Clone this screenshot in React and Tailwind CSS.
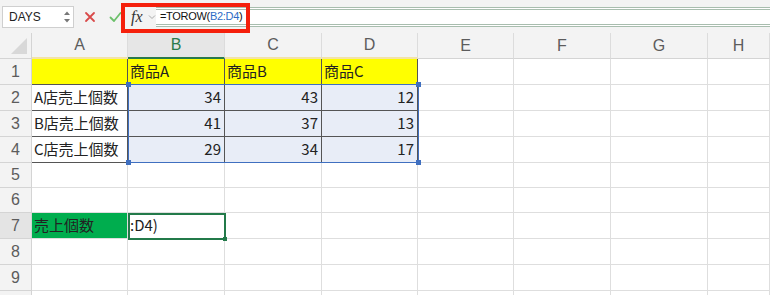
import React from "react";

const cols = ["A", "B", "C", "D", "E", "F", "G", "H"];
const rowHeights = [26, 26, 26, 26, 25, 25, 26, 26, 26, 26];

const jp = { fontFamily: '"Hiragino Sans","Noto Sans CJK JP","Noto Sans",sans-serif' };

function cellData(r, c) {
  const data = {
    "1-1": "商品A", "1-2": "商品B", "1-3": "商品C",
    "2-0": "A店売上個数", "2-1": "34", "2-2": "43", "2-3": "12",
    "3-0": "B店売上個数", "3-1": "41", "3-2": "37", "3-3": "13",
    "4-0": "C店売上個数", "4-1": "29", "4-2": "34", "4-3": "17",
    "7-0": "売上個数", "7-1": ":D4)",
  };
  return data[`${r}-${c}`] || "";
}

function Cell({ r, c }) {
  const inTable = r <= 4 && c <= 3;
  const yellow = r === 1 && c <= 3;
  const blue = r >= 2 && r <= 4 && c >= 1 && c <= 3;
  const green = r === 7 && c === 0;
  const num = blue;
  let bg = "bg-white";
  if (yellow) bg = "bg-[#ffff00]";
  else if (blue) bg = "bg-[#e8edf7]";
  else if (green) bg = "bg-[#00ad4e]";
  const borderR = inTable ? "border-r-[#555]" : "border-r-[#dedede]";
  const borderB = inTable ? "border-b-[#555]" : "border-b-[#dedede]";
  return (
    <div
      className={`${bg} border-r border-b ${borderR} ${borderB} flex items-center overflow-hidden whitespace-nowrap text-[15px] text-[#222] ${num ? "justify-end pr-[3px]" : "justify-start pl-[2px]"}`}
      style={jp}
    >
      {cellData(r, c)}
    </div>
  );
}

export default function App() {
  return (
    <div className="w-[770px] h-[295px] overflow-hidden bg-white relative" style={jp}>
      {/* Toolbar / formula bar */}
      <div className="h-[33px] bg-[#f3f3f3] flex items-center relative">
        <div className="ml-[2px] w-[72px] h-[22px] bg-white border border-[#cfcfcf] flex items-center justify-between pl-[6px] pr-[2px] shrink-0">
          <span className="text-[12px] text-[#222]" style={{ fontFamily: '"Liberation Sans",Arial,sans-serif' }}>DAYS</span>
          <svg width="8" height="14" viewBox="0 0 8 14">
            <path d="M1 5 L4 1.5 L7 5 Z" fill="#777" />
            <path d="M1 9 L4 12.5 L7 9 Z" fill="#777" />
          </svg>
        </div>
        <svg width="12" height="12" viewBox="0 0 12 12" className="ml-[10px] shrink-0">
          <path d="M2 2 L10 10 M10 2 L2 10" stroke="#d94a4a" strokeWidth="1.8" strokeLinecap="round" />
        </svg>
        <svg width="13" height="12" viewBox="0 0 13 12" className="ml-[13px] shrink-0">
          <path d="M1.5 6.5 L5 10 L11.5 2" stroke="#6cc06b" strokeWidth="1.8" fill="none" strokeLinecap="round" strokeLinejoin="round" />
        </svg>
        <div className="ml-[9px] w-[16px] text-[16px] italic text-[#333] shrink-0" style={{ fontFamily: '"Liberation Serif","Times New Roman",serif' }}>
          fx
        </div>
        <svg width="8" height="6" viewBox="0 0 8 6" className="ml-[1px] shrink-0">
          <path d="M1 1.5 L4 4.5 L7 1.5" stroke="#aaa" strokeWidth="1" fill="none" />
        </svg>
        <div className="flex-1 h-[20px] bg-white border-y-[3px] border-double border-[#a8bdae] flex items-center pl-[4px]">
          <span className="text-[11px] tracking-[-0.3px] text-[#111]" style={{ fontFamily: '"Liberation Sans",Arial,sans-serif' }}>
            =TOROW(<span className="text-[#2d6bc6]">B2:D4</span>)
          </span>
        </div>
        {/* red annotation box */}
        <div className="absolute left-[121px] top-[3px] w-[129px] h-[30px] border-[4px] border-[#f5200c]" />
      </div>

      {/* Sheet */}
      <div className="relative">
        <div
          className="grid grid-cols-[32px_96px_97px_97px_96px_96px_97px_97px_1fr]"
          style={{ gridTemplateRows: `26px ${rowHeights.map((h) => h + "px").join(" ")}` }}
        >
          <div className="bg-[#f3f3f3] border-r border-b border-[#d4d4d4] relative">
            <svg width="20" height="20" viewBox="0 0 20 20" className="absolute right-[2px] bottom-[2px]">
              <path d="M18 2 L18 18 L2 18 Z" fill="#d8d8d8" />
            </svg>
          </div>
          {cols.map((c, i) => (
            <div
              key={c}
              className={`flex items-center justify-center text-[16px] border-r border-r-[#dcdcdc] ${
                c === "B"
                  ? "bg-[#e6e6e6] text-[#2a7a4b] border-b-[2px] border-b-[#2a7a4b]"
                  : i <= 3
                  ? "bg-[#f3f3f3] text-[#5c5c5c] border-b-[2px] border-b-[#f3e3a6]"
                  : "bg-[#f3f3f3] text-[#5c5c5c] border-b border-b-[#d4d4d4]"
              }`}
              style={{ fontFamily: '"Liberation Sans",Arial,sans-serif', fontWeight: 300 }}
            >
              {c}
            </div>
          ))}
          {rowHeights.map((h, ri) => {
            const r = ri + 1;
            return (
              <React.Fragment key={r}>
                <div
                  className={`flex items-center justify-center text-[16px] text-[#5c5c5c] border-r border-b border-[#d4d4d4] ${
                    r === 7 ? "bg-[#e4e4e4]" : "bg-[#f3f3f3]"
                  }`}
                  style={{ fontFamily: '"Liberation Sans",Arial,sans-serif' }}
                >
                  {r <= 9 ? r : ""}
                </div>
                {cols.map((c, ci) => (
                  <Cell key={c} r={r} c={ci} />
                ))}
              </React.Fragment>
            );
          })}
        </div>

        {/* Selection range B2:D4 */}
        <div className="absolute left-[128px] top-[51px] w-[291px] h-[79px] border-[1.5px] border-[#3f6fc0] pointer-events-none" />
        <div className="absolute left-[126px] top-[49px] w-[5px] h-[5px] bg-[#3f6fc0]" />
        <div className="absolute left-[416px] top-[49px] w-[5px] h-[5px] bg-[#3f6fc0]" />
        <div className="absolute left-[126px] top-[127px] w-[5px] h-[5px] bg-[#3f6fc0]" />
        <div className="absolute left-[416px] top-[127px] w-[5px] h-[5px] bg-[#3f6fc0]" />

        {/* Active cell B7 */}
        <div className="absolute left-[128px] top-[180px] w-[98px] h-[27px] border-[2px] border-[#237a4a] pointer-events-none" />
        <div className="absolute left-[223px] top-[204px] w-[4px] h-[4px] bg-[#237a4a]" />
      </div>
    </div>
  );
}
